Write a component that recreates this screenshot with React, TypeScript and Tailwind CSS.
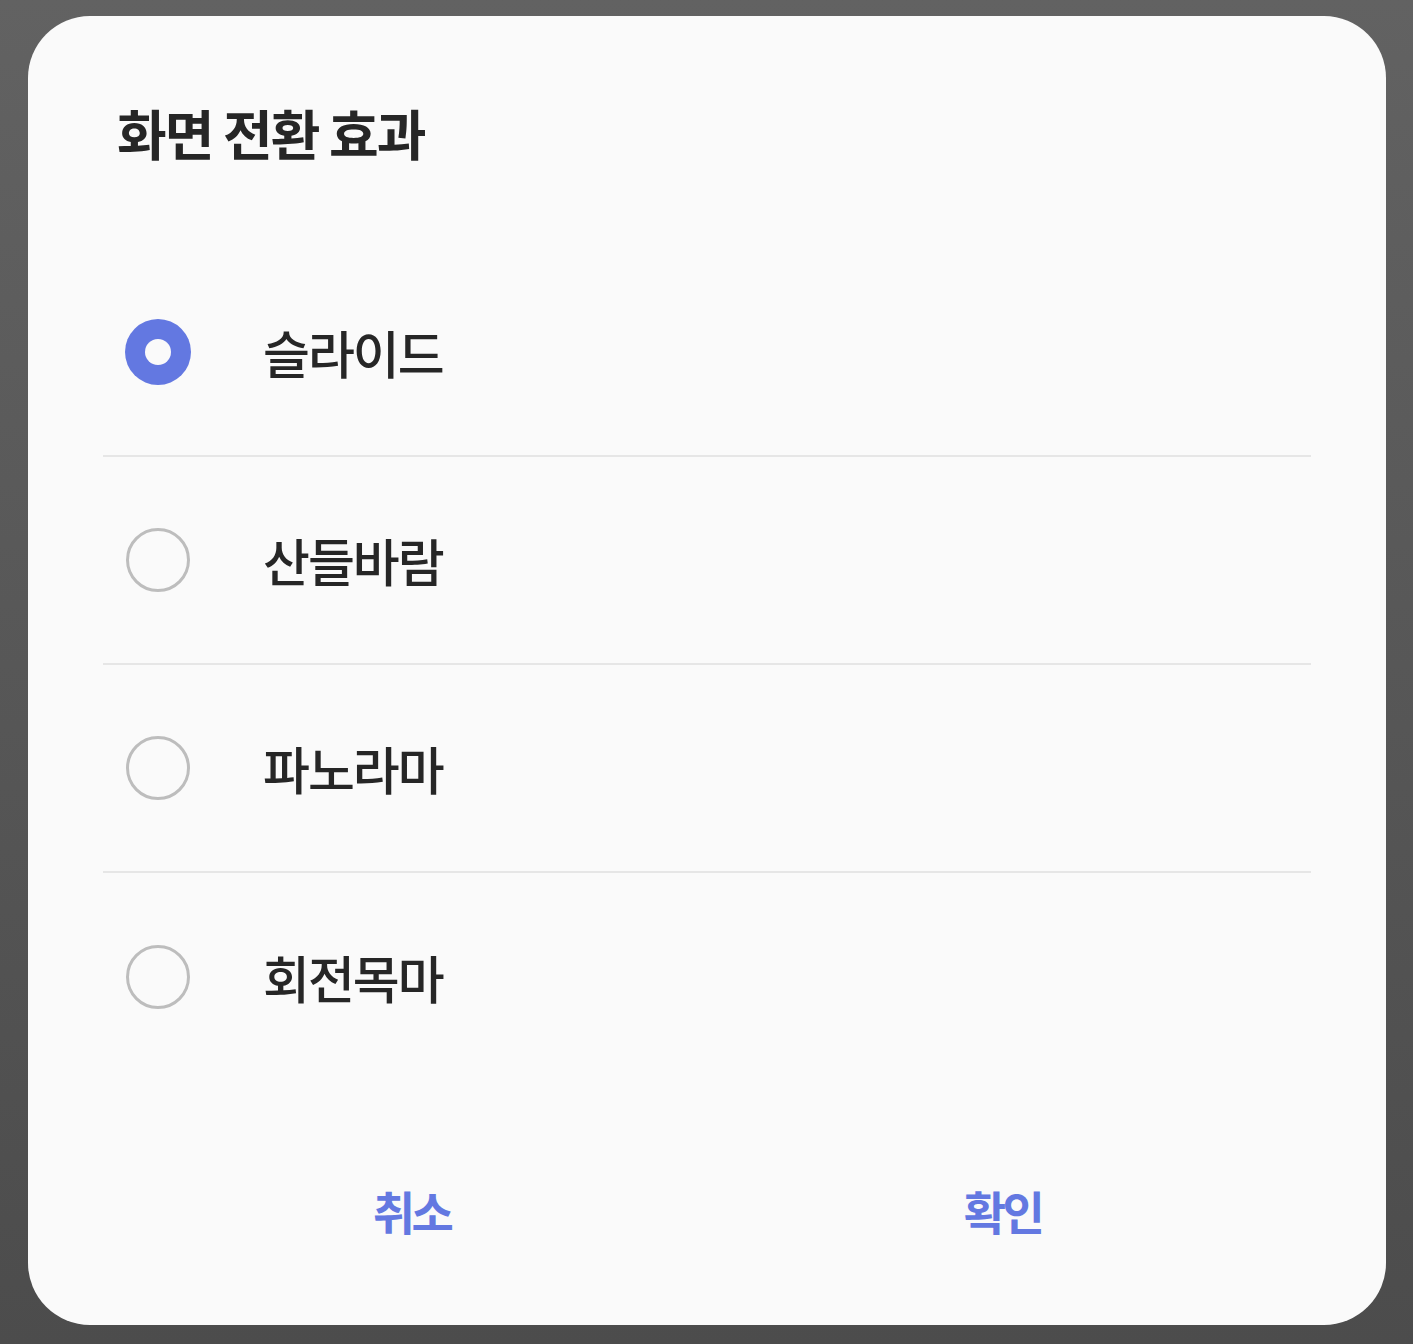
import React from "react";

const options = ["슬라이드", "산들바람", "파노라마", "회전목마"];

export default function App() {
  const selected = 0;
  return (
    <div
      className="min-h-[1344px] w-full pt-[16px] pb-[19px] pl-[28px] pr-[27px] bg-gradient-to-b from-[#626262] to-[#4c4c4c]"
      style={{ fontFamily: '"Noto Sans CJK KR", "Noto Sans", sans-serif' }}
    >
      <div className="h-[1309px] w-full rounded-[62px] bg-[#fafafa] flex flex-col pt-[82px]">
        <h1 className="pl-[89px] h-[70px] flex items-center text-[54px] font-bold text-[#262626] tracking-[-0.035em] leading-none">
          화면 전환 효과
        </h1>
        <div className="mt-[81px] px-[75px] flex flex-col">
          {options.map((label, i) => (
            <div
              key={label}
              className={
                "h-[208px] flex items-center pl-[22px] " +
                (i < options.length - 1 ? "border-b-2 border-[#e6e6e6]" : "")
              }
            >
              {i === selected ? (
                <div className="w-[66px] h-[66px] rounded-full bg-[#6378e1] flex items-center justify-center shrink-0">
                  <div className="w-[26px] h-[26px] rounded-full bg-[#fafafa]" />
                </div>
              ) : (
                <div className="w-[64px] h-[64px] rounded-full border-[3px] border-[#bdbdbd] shrink-0 mx-[1px]" />
              )}
              <span className="ml-[72px] text-[51px] font-medium text-[#262626] tracking-[-0.04em] leading-none">
                {label}
              </span>
            </div>
          ))}
        </div>
        <div className="mt-[79px] px-[88px] flex h-[100px]">
          <button className="flex-1 flex items-center justify-center text-[46px] font-bold text-[#6378e1] tracking-[-0.08em] leading-none">
            취소
          </button>
          <button className="flex-1 flex items-center justify-center text-[46px] font-bold text-[#6378e1] tracking-[-0.08em] leading-none">
            확인
          </button>
        </div>
      </div>
    </div>
  );
}
